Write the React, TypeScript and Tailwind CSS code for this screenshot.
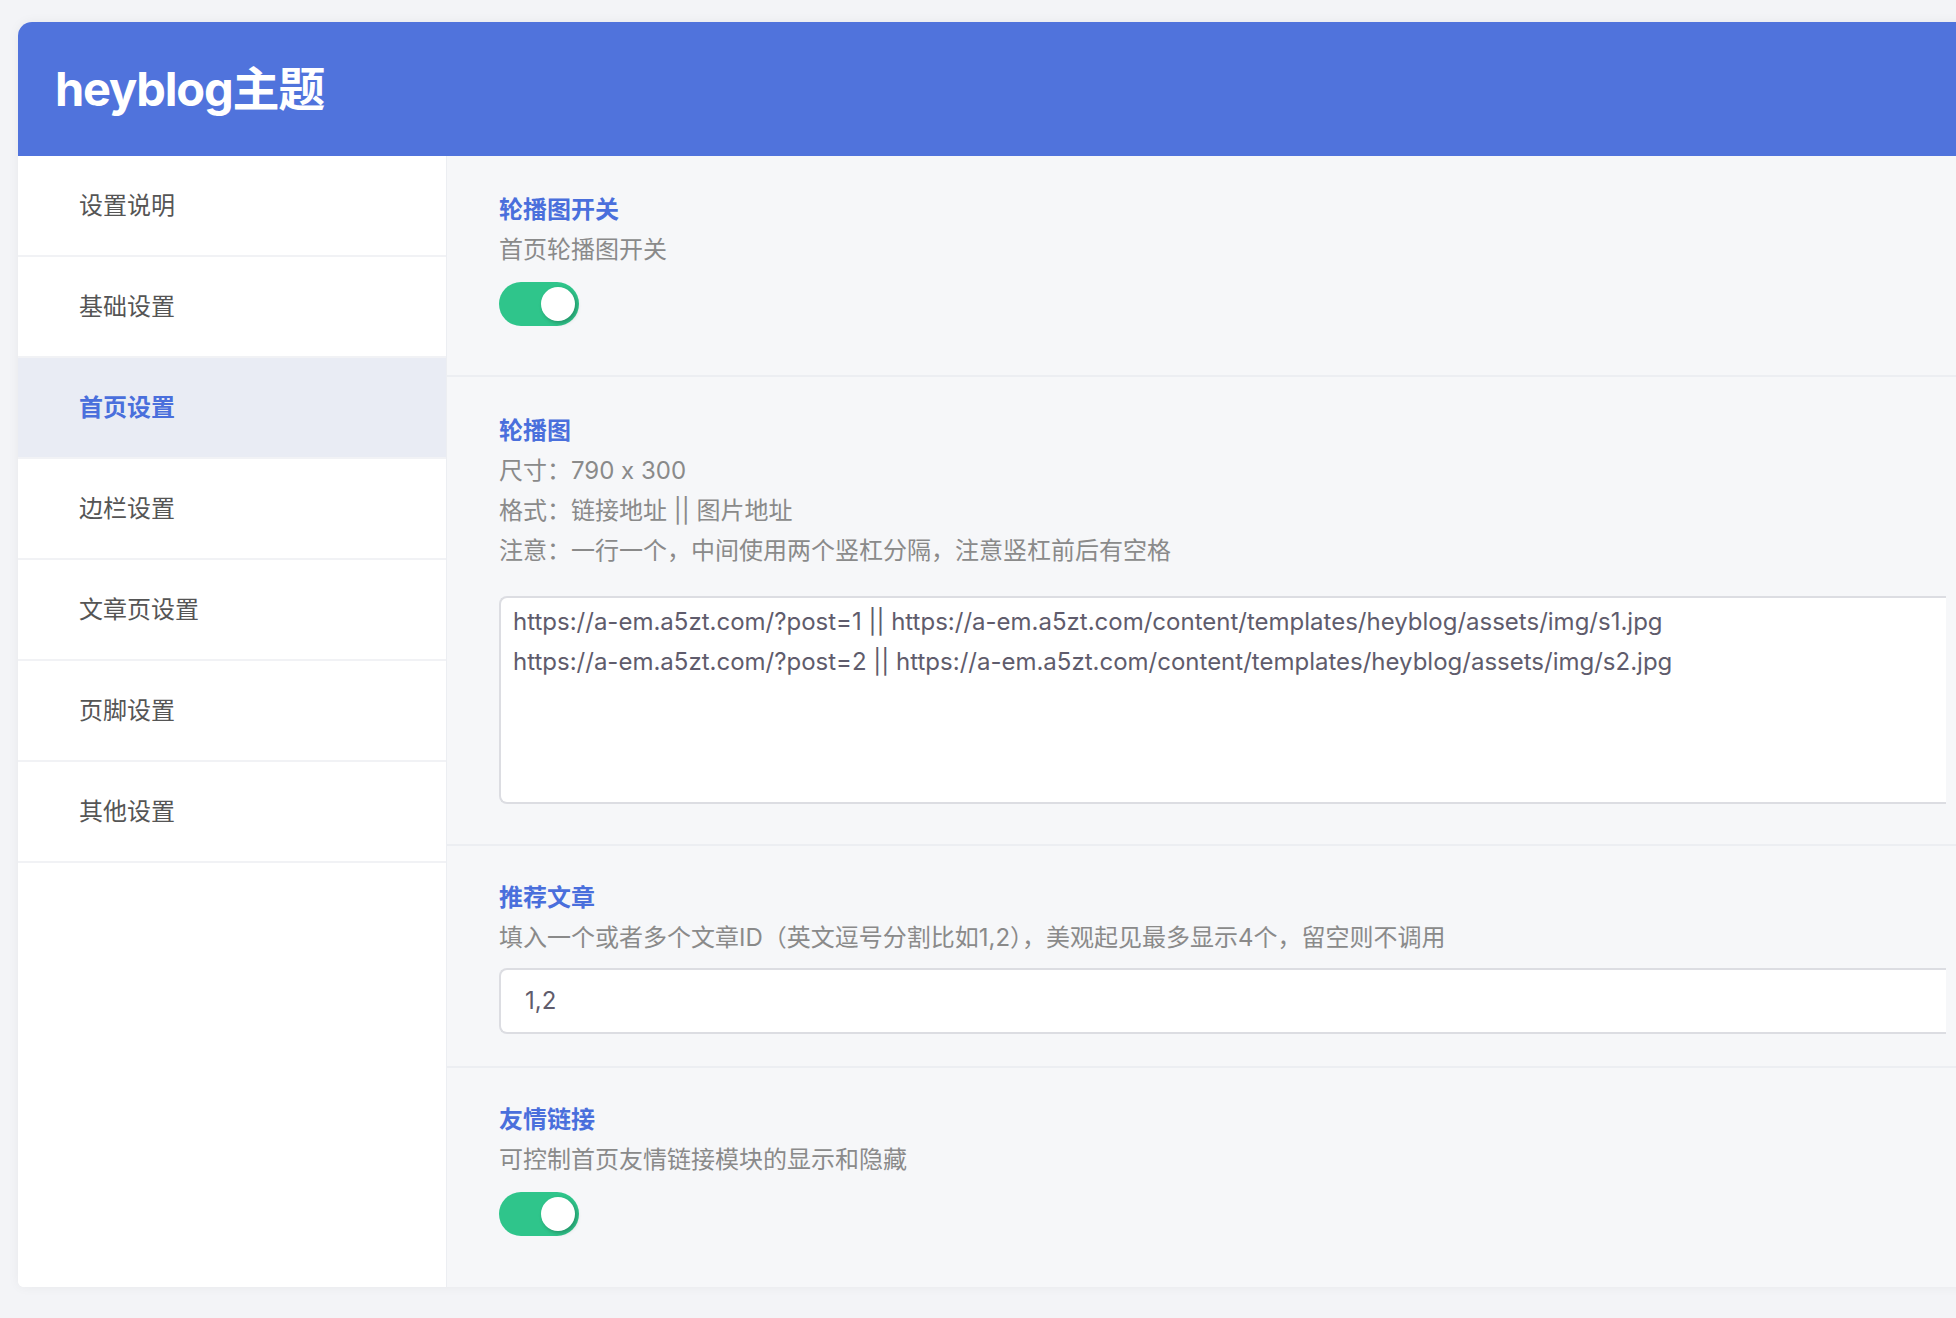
const font = { fontFamily: '"Helvetica Neue", Inter, "Noto Sans CJK SC", sans-serif' };

const nav = ["设置说明", "基础设置", "首页设置", "边栏设置", "文章页设置", "页脚设置", "其他设置"];

function Toggle() {
  return (
    <div className="mt-[12px] flex h-[44px] w-[80px] items-center justify-end rounded-full bg-[#2fc58b] pr-[4px]">
      <div className="h-[34px] w-[34px] rounded-full bg-white shadow-[2px_2px_4px_rgba(0,0,0,0.25)]" />
    </div>
  );
}

export default function App() {
  return (
    <div className="h-[1318px] w-[1956px] overflow-hidden bg-[#f3f4f7] pl-[18px] pt-[22px]" style={font}>
      <div className="w-[1980px] overflow-hidden rounded-tl-[14px] rounded-bl-[6px] bg-white shadow-[0_0_12px_rgba(0,0,0,0.05)]">
        <div className="flex h-[134px] items-center bg-[#5073dc] pl-[37px]">
          <h1 className="text-[47px] font-bold tracking-tight text-white">heyblog主题</h1>
        </div>
        <div className="flex">
          <div className="w-[429px] shrink-0 border-r border-[#eceef2] bg-white">
            {nav.map((n, i) => (
              <div
                key={n}
                className={`flex h-[101px] items-center border-b-2 border-[#f1f2f5] pl-[61px] text-[24px] ${i === 2 ? "bg-[#e9ecf4] font-semibold text-[#4a6fdc]" : "text-[#555]"}`}
              >
                {n}
              </div>
            ))}
          </div>
          <div className="flex-1 bg-[#f6f7f9] text-[24px]">
            <div className="h-[221px] border-b-2 border-[#eceef2] px-[52px] pt-[34px]">
              <div className="font-bold leading-[40px] text-[#4a6fdc]">轮播图开关</div>
              <div className="leading-[40px] text-[#8a8a8a]">首页轮播图开关</div>
              <Toggle />
            </div>
            <div className="h-[469px] border-b-2 border-[#eceef2] px-[52px] pt-[34px]">
              <div className="font-bold leading-[40px] text-[#4a6fdc]">轮播图</div>
              <div className="leading-[40px] text-[#8a8a8a]">尺寸：790 x 300</div>
              <div className="leading-[40px] text-[#8a8a8a]">格式：链接地址 || 图片地址</div>
              <div className="leading-[40px] text-[#8a8a8a]">注意：一行一个，中间使用两个竖杠分隔，注意竖杠前后有空格</div>
              <div className="mt-[25px] h-[208px] rounded-l-[8px] border-2 border-r-0 border-[#dcdde2] bg-white px-[12px] pt-[4px] leading-[40px] text-[#5f5c6c]">
                <div>https://a-em.a5zt.com/?post=1 || https://a-em.a5zt.com/content/templates/heyblog/assets/img/s1.jpg</div>
                <div>https://a-em.a5zt.com/?post=2 || https://a-em.a5zt.com/content/templates/heyblog/assets/img/s2.jpg</div>
              </div>
            </div>
            <div className="h-[222px] border-b-2 border-[#eceef2] px-[52px] pt-[32px]">
              <div className="font-bold leading-[40px] text-[#4a6fdc]">推荐文章</div>
              <div className="leading-[40px] text-[#8a8a8a]">填入一个或者多个文章ID（英文逗号分割比如1,2），美观起见最多显示4个，留空则不调用</div>
              <div className="mt-[10px] flex h-[66px] items-center rounded-l-[8px] border-2 border-r-0 border-[#dcdde2] bg-white pl-[24px] text-[#5f5c6c]">1,2</div>
            </div>
            <div className="h-[219px] px-[52px] pt-[32px]">
              <div className="font-bold leading-[40px] text-[#4a6fdc]">友情链接</div>
              <div className="leading-[40px] text-[#8a8a8a]">可控制首页友情链接模块的显示和隐藏</div>
              <Toggle />
            </div>
          </div>
        </div>
      </div>
    </div>
  );
}
